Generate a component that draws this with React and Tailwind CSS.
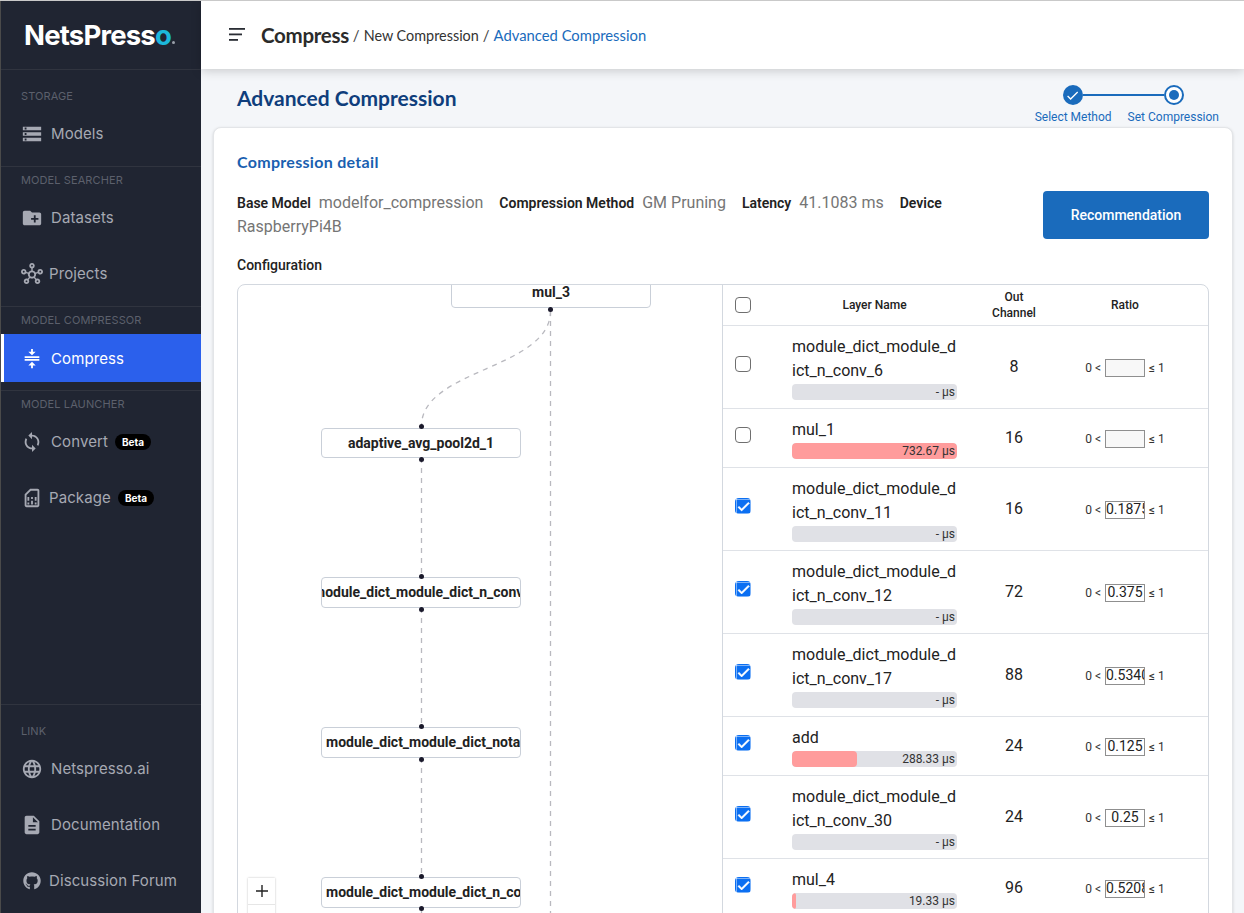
import { FaGithub } from 'react-icons/fa'
import {
  MdStorage, MdCreateNewFolder, MdOutlineHub, MdCompress, MdSync,
  MdOutlineSimCard, MdLanguage, MdDescription, MdCheck,
} from 'react-icons/md'

const rows = [
  { name: 'module_dict_module_dict_n_conv_6', us: '- µs', fill: 0, out: 8, ratio: '', checked: false },
  { name: 'mul_1', us: '732.67 µs', fill: 100, out: 16, ratio: '', checked: false },
  { name: 'module_dict_module_dict_n_conv_11', us: '- µs', fill: 0, out: 16, ratio: '0.1875', checked: true },
  { name: 'module_dict_module_dict_n_conv_12', us: '- µs', fill: 0, out: 72, ratio: '0.375', checked: true },
  { name: 'module_dict_module_dict_n_conv_17', us: '- µs', fill: 0, out: 88, ratio: '0.5340', checked: true },
  { name: 'add', us: '288.33 µs', fill: 39.4, out: 24, ratio: '0.125', checked: true },
  { name: 'module_dict_module_dict_n_conv_30', us: '- µs', fill: 0, out: 24, ratio: '0.25', checked: true },
  { name: 'mul_4', us: '19.33 µs', fill: 2.6, out: 96, ratio: '0.5208', checked: true },
]

const nodes = [
  { name: 'mul_3', box: 'left-[213px] top-[-10px] h-[33px] w-[200px] justify-center pt-[2px]' },
  { name: 'adaptive_avg_pool2d_1', box: 'left-[83px] top-[143px] h-[30px] w-[200px] justify-center' },
  { name: 'module_dict_module_dict_n_conv_12', box: 'left-[83px] top-[292px] h-[31px] w-[200px] pl-0 [&>span]:ml-[-9px]' },
  { name: 'module_dict_module_dict_notation_1', box: 'left-[83px] top-[442px] h-[31px] w-[200px] pl-[4px]' },
  { name: 'module_dict_module_dict_n_conv_30', box: 'left-[83px] top-[592px] h-[31px] w-[200px] pl-[4px]' },
]

const dots = [
  'left-[310px] top-[22px]',
  'left-[181px] top-[139px]',
  'left-[181px] top-[172px]',
  'left-[181px] top-[289px]',
  'left-[181px] top-[322px]',
  'left-[181px] top-[439px]',
  'left-[181px] top-[472px]',
  'left-[181px] top-[589px]',
  'left-[181px] top-[621px]',
]

function NavLabel({ children }) {
  return <div className="mb-[-1px] h-[13px] pl-5 text-[11px] leading-[15px] tracking-[0.1px] text-[#5c606c]">{children}</div>
}

function NavItem({ icon: Icon, label, beta, active, tight, size = 22 }) {
  return (
    <div className={`mt-2 flex h-12 items-center pt-[2px] ${active ? 'border-l-[3px] border-white bg-[#2b60ec] pl-[17px] text-white' : 'pl-5 text-[#a6a9b3]'}`}>
      <span className="flex w-[22px] justify-center"><Icon size={size} /></span>
      <span className={`text-[15px] tracking-[0.1px] ${tight ? 'ml-[6px]' : 'ml-2'}`}>{label}</span>
      {beta && <span className="ml-[7px] rounded-full bg-black px-[7px] py-[1px] text-[10px] font-bold leading-[14px] text-white">Beta</span>}
    </div>
  )
}

function Sidebar() {
  return (
    <aside className="flex h-full w-[201px] shrink-0 flex-col border-l border-[#4a4a4a] bg-[#202532] font-['Inter',sans-serif]">
      <div className="flex h-[69px] items-center border-b border-[#30343f] pl-[23px] pt-[2px] text-[27.5px] font-bold tracking-[-0.8px] text-white">
        NetsPress<span className="text-[#1cb8dc]">o</span>
        <span className="ml-[1px] mt-[13px] h-[3px] w-[3px] rounded-full bg-[#9aa0aa]" />
      </div>
      <div className="border-b border-[#30343f] pb-[9px] pt-[19px]">
        <NavLabel>STORAGE</NavLabel>
        <NavItem icon={MdStorage} label="Models" />
      </div>
      <div className="border-b border-[#30343f] pb-[9px] pt-[6px]">
        <NavLabel>MODEL SEARCHER</NavLabel>
        <NavItem icon={MdCreateNewFolder} label="Datasets" />
        <NavItem icon={MdOutlineHub} label="Projects" tight />
      </div>
      <div className="border-b border-[#30343f] pb-[8px] pt-[6px]">
        <NavLabel>MODEL COMPRESSOR</NavLabel>
        <div className="pt-[1px]">
          <NavItem icon={MdCompress} label="Compress" active />
        </div>
      </div>
      <div className="pt-[6px]">
        <NavLabel>MODEL LAUNCHER</NavLabel>
        <NavItem icon={MdSync} label="Convert" beta />
        <NavItem icon={MdOutlineSimCard} label="Package" beta tight />
      </div>
      <div className="mt-auto border-t border-[#30343f] pb-[9px] pt-[19px]">
        <NavLabel>LINK</NavLabel>
        <NavItem icon={MdLanguage} label="Netspresso.ai" />
        <NavItem icon={MdDescription} label="Documentation" />
        <NavItem icon={FaGithub} label="Discussion Forum" tight size={18} />
      </div>
    </aside>
  )
}

function Topbar() {
  return (
    <header className="relative z-10 flex h-[68px] shrink-0 items-center bg-white pl-[28px] font-['Lato',sans-serif] shadow-[0_2px_10px_rgba(0,0,0,0.18)]">
      <svg width="16" height="14" viewBox="0 0 16 14" className="mr-4 shrink-0" fill="#2a2d34">
        <rect x="0" y="0" width="16" height="1.8" />
        <rect x="0" y="5.5" width="13" height="1.8" />
        <rect x="0" y="11" width="9" height="1.8" />
      </svg>
      <div className="flex items-center">
        <span className="text-[20.5px] font-bold tracking-[-0.3px] text-[#2b2b2b]">Compress</span>
        <div className="flex items-center pt-[1px]">
          <span className="ml-1 mr-1 text-[15px] text-[#444]">/</span>
          <span className="text-[14.4px] text-[#333]">New Compression</span>
          <span className="mx-1 text-[15px] text-[#444]">/</span>
          <span className="text-[14.8px] text-[#1a6bbc]">Advanced Compression</span>
        </div>
      </div>
    </header>
  )
}

function Stepper() {
  return (
    <div className="font-['Roboto',sans-serif] text-[12px] leading-[16px] text-[#1a6bbc]">
      <div className="flex items-center pl-[28px]">
        <span className="flex h-5 w-5 items-center justify-center rounded-full bg-[#1a6bbc] text-white"><MdCheck size={15} /></span>
        <span className="h-[2px] w-[81px] bg-[#1a6bbc]" />
        <span className="flex h-5 w-5 items-center justify-center rounded-full border-2 border-[#1a6bbc] bg-white">
          <span className="h-[10px] w-[10px] rounded-full bg-[#1a6bbc]" />
        </span>
      </div>
      <div className="mt-[4px] flex gap-4">
        <span>Select Method</span>
        <span>Set Compression</span>
      </div>
    </div>
  )
}

function Meta({ label, value }) {
  return (
    <>
      <span className="mr-1 text-[14px] font-semibold text-[#222]">{label}</span>
      {' '}
      <span className="mr-[12px] text-[16px] text-[#757575]">{value}</span>
      {' '}
    </>
  )
}

function Graph() {
  return (
    <div className="relative w-[485px] shrink-0 overflow-hidden border-r border-[#d3d8df]">
      <svg width="485" height="800" className="absolute left-0 top-0" fill="none" stroke="#b9b9bf" strokeWidth="1.3" strokeDasharray="5 5">
        <path d="M312.5 26V800" />
        <path d="M312.5 26C312.5 84 183.5 84 183.5 141" />
        <path d="M183.5 173V292M183.5 323V442M183.5 473V592M183.5 623V800" />
      </svg>
      {nodes.map((node) => (
        <div key={node.name} className={`absolute flex items-center overflow-hidden rounded border border-[#c9cfd8] bg-white text-[14px] font-bold text-[#222] ${node.box}`}>
          <span className="shrink-0 whitespace-nowrap">{node.name}</span>
        </div>
      ))}
      {dots.map((pos) => (
        <span key={pos} className={`absolute h-[5px] w-[5px] rounded-full bg-[#1a192b] ${pos}`} />
      ))}
      <div className="absolute left-[10px] top-[593px] w-[27px] bg-white shadow-[0_0_2px_rgba(0,0,0,0.25)]">
        <div className="flex h-[27px] items-center justify-center border-b border-[#e6e6e6] text-[#222]">
          <svg width="14" height="14" viewBox="0 0 14 14" stroke="currentColor" strokeWidth="1.4"><path d="M7 1v12M1 7h12" /></svg>
        </div>
        <div className="h-[27px]" />
      </div>
    </div>
  )
}

function Checkbox({ checked }) {
  if (checked) {
    return (
      <span className="flex h-4 w-4 items-center justify-center rounded bg-[#0b6ff2] text-white"><MdCheck size={15} strokeWidth={1.5} /></span>
    )
  }
  return <span className="block h-4 w-4 rounded border border-[#6f6f6f] bg-white" />
}

function Row({ row }) {
  return (
    <div className="flex items-center border-b border-[#dfe2e7] pb-[8px] pt-[9px] text-[#222]">
      <div className="mb-[7px] w-[69px] shrink-0 pl-3"><Checkbox checked={row.checked} /></div>
      <div className="w-[165px] shrink-0">
        <div className="break-all text-[16px] leading-[24px]">{row.name}</div>
        <div className="relative mt-[1px] h-4 overflow-hidden rounded bg-[#e0e1e6]">
          <div className="h-full rounded bg-[#ff9c9c]" style={{ width: `${row.fill}%` }} />
          <span className="absolute right-[2px] top-0 text-[12px] leading-4 text-[#333]">{row.us}</span>
        </div>
      </div>
      <div className="mb-[2px] w-[114px] shrink-0 text-center text-[16px]">{row.out}</div>
      <div className="flex w-[108px] shrink-0 items-center justify-center gap-[4px] text-[12px] text-[#333]">
        <span>0 &lt;</span>
        <input
          readOnly
          disabled={!row.checked}
          value={row.ratio}
          className="h-[18px] w-10 border border-[#8f8f8f] bg-white px-0 text-center text-[14px] text-[#222] outline-none disabled:bg-[#f8f8f8]"
        />
        <span>≤ 1</span>
      </div>
    </div>
  )
}

function LayerTable() {
  return (
    <div className="min-w-0 flex-1">
      <div className="flex h-[41px] items-center border-b border-[#dfe2e7] text-[12px] font-medium leading-4 text-[#222]">
        <div className="w-[69px] shrink-0 pl-3"><Checkbox /></div>
        <div className="w-[165px] shrink-0 text-center">Layer Name</div>
        <div className="w-[114px] shrink-0 text-center">Out<br />Channel</div>
        <div className="w-[108px] shrink-0 text-center">Ratio</div>
      </div>
      {rows.map((row) => <Row key={row.name} row={row} />)}
    </div>
  )
}

export default function App() {
  return (
    <div className="h-screen overflow-hidden border-t border-[#c9c9c9]">
      <div className="flex h-full">
        <Sidebar />
        <div className="flex min-w-0 flex-1 flex-col bg-[#f4f6f9]">
          <Topbar />
          <div className="flex h-[58px] shrink-0 items-start justify-between pl-[36px] pr-[25px] pt-[16px]">
            <h1 className="mt-[-3px] font-['Lato',sans-serif] text-[21px] font-bold text-[#0f3e7c]">Advanced Compression</h1>
            <Stepper />
          </div>
          <div className="ml-3 mr-[11px] flex-1 rounded-t-lg border border-[#e3e5e8] bg-white px-[23px] pt-[24px] font-['Roboto',sans-serif] shadow-[0_1px_3px_rgba(0,0,0,0.15)]">
            <h2 className="font-['Lato',sans-serif] text-[16px] font-bold leading-[20px] tracking-[0.3px] text-[#1a5fb0]">Compression detail</h2>
            <div className="mt-[22px] flex items-start">
              <div className="mt-[-3px] min-w-0 flex-1 pr-6 leading-[24px]">
                <Meta label="Base Model" value="modelfor_compression" />
                <Meta label="Compression Method" value="GM Pruning" />
                <Meta label="Latency" value="41.1083 ms" />
                <Meta label="Device" value="RaspberryPi4B" />
              </div>
              <button className="mt-[-3px] h-12 w-[166px] shrink-0 rounded bg-[#1a6bbc] text-[14px] font-medium text-white">Recommendation</button>
            </div>
            <div className="mt-[16px] text-[14px] font-medium leading-[20px] text-[#222]">Configuration</div>
            <div className="mt-[9px] flex h-[800px] overflow-hidden rounded-lg border border-[#d3d8df]">
              <Graph />
              <LayerTable />
            </div>
          </div>
        </div>
      </div>
    </div>
  )
}
